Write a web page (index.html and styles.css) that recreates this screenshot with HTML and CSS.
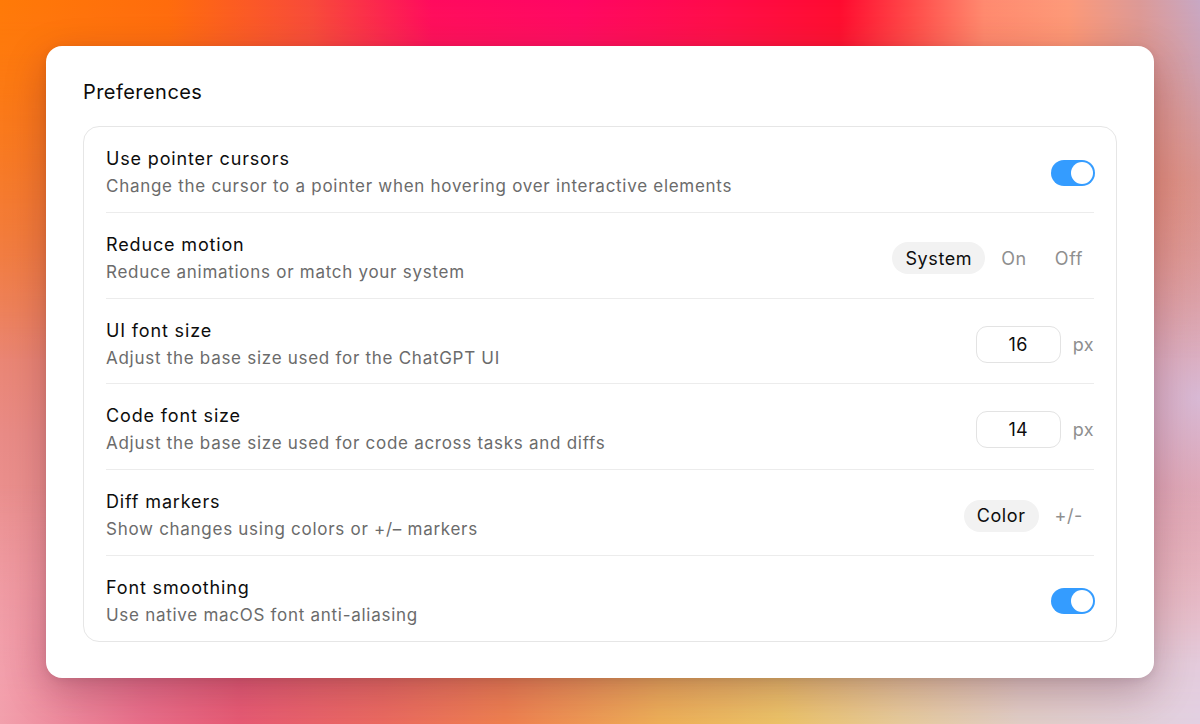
FILE: index.html
```html
<!DOCTYPE html>
<html lang="en">
<head>
<meta charset="utf-8">
<title>Preferences</title>
<link rel="stylesheet" href="styles.css">
</head>
<body>
<main class="card">
  <h1 class="card-title">Preferences</h1>
  <section class="panel">
    <div class="row">
      <div class="text">
        <div class="label">Use pointer cursors</div>
        <div class="desc">Change the cursor to a pointer when hovering over interactive elements</div>
      </div>
      <div class="toggle on"><span class="knob"></span></div>
    </div>
    <div class="row">
      <div class="text">
        <div class="label">Reduce motion</div>
        <div class="desc">Reduce animations or match your system</div>
      </div>
      <div class="segmented">
        <span class="seg active">System</span>
        <span class="seg">On</span>
        <span class="seg">Off</span>
      </div>
    </div>
    <div class="row">
      <div class="text">
        <div class="label">UI font size</div>
        <div class="desc">Adjust the base size used for the ChatGPT UI</div>
      </div>
      <div class="num-field">
        <span class="num-input">16</span>
        <span class="unit">px</span>
      </div>
    </div>
    <div class="row">
      <div class="text">
        <div class="label">Code font size</div>
        <div class="desc">Adjust the base size used for code across tasks and diffs</div>
      </div>
      <div class="num-field">
        <span class="num-input">14</span>
        <span class="unit">px</span>
      </div>
    </div>
    <div class="row">
      <div class="text">
        <div class="label">Diff markers</div>
        <div class="desc">Show changes using colors or +/– markers</div>
      </div>
      <div class="segmented">
        <span class="seg active">Color</span>
        <span class="seg">+/-</span>
      </div>
    </div>
    <div class="row">
      <div class="text">
        <div class="label">Font smoothing</div>
        <div class="desc">Use native macOS font anti-aliasing</div>
      </div>
      <div class="toggle on"><span class="knob"></span></div>
    </div>
  </section>
</main>
</body>
</html>
```

FILE: styles.css
```css
* { box-sizing: border-box; }

html, body {
  margin: 0;
  width: 1200px;
  height: 724px;
  overflow: hidden;
}

body {
  position: relative;
  font-family: Inter, "Noto Sans", "Liberation Sans", sans-serif;
  color: #0d0d0d;
  padding: 46px;
  background:
    radial-gradient(ellipse 260px 220px at 100% 55%, rgba(214, 190, 222, 0.9), rgba(214, 190, 222, 0)),
    linear-gradient(180deg, #f07538 0%, #ec7f5c 35%, #e98b86 60%, #f0a0aa 100%);
}

body::before {
  content: "";
  position: absolute;
  left: 0; top: 0; right: 0;
  height: 360px;
  background: linear-gradient(90deg,
    #ff7a08 0%, #ff6c0c 14%, #f84a3a 26%, #ff0a5e 36%, #ff0564 48%,
    #ff0a4a 60%, #ff0a30 70%, #ff4a4a 76%, #ff8a70 82%, #fd9a7a 89%,
    #dc9a98 95%, #c8a8c4 100%);
  -webkit-mask-image: linear-gradient(180deg, #000 0%, rgba(0,0,0,0.85) 20%, rgba(0,0,0,0) 100%);
  mask-image: linear-gradient(180deg, #000 0%, rgba(0,0,0,0.85) 20%, rgba(0,0,0,0) 100%);
  z-index: 0;
}

body::after {
  content: "";
  position: absolute;
  left: 0; bottom: 0; right: 0;
  height: 240px;
  background: linear-gradient(90deg,
    #f2a0ac 0%, #ea6e8a 12%, #e85a74 20%, #ec6a60 32%, #f08050 42%,
    #efb058 55%, #edc468 65%, #e8cc9c 75%, #e2cfc8 85%, #e2d0e2 100%);
  -webkit-mask-image: linear-gradient(0deg, #000 0%, rgba(0,0,0,0.9) 25%, rgba(0,0,0,0) 100%);
  mask-image: linear-gradient(0deg, #000 0%, rgba(0,0,0,0.9) 25%, rgba(0,0,0,0) 100%);
  z-index: 0;
}

.card {
  position: relative;
  z-index: 1;
  width: 1108px;
  height: 632px;
  background: #ffffff;
  border-radius: 16px;
  padding: 32px 37px 37px;
  box-shadow: 0 14px 40px rgba(70, 10, 40, 0.28), 0 2px 8px rgba(0, 0, 0, 0.08);
}

.card-title {
  margin: 0 0 20px;
  font-size: 20px;
  line-height: 28px;
  font-weight: 400;
  color: #0d0d0d;
  letter-spacing: 0.45px;
}

.panel {
  border: 1px solid #e6e6e6;
  border-radius: 16px;
  padding: 0 22px;
}

.row {
  display: flex;
  align-items: center;
  justify-content: space-between;
  padding: 18px 0 11.8px;
  border-bottom: 1px solid #ececec;
}

.row:last-child { border-bottom: none; }

.label {
  font-size: 18px;
  line-height: 27px;
  color: #0d0d0d;
  letter-spacing: 0.85px;
}

.desc {
  font-size: 17px;
  line-height: 28px;
  color: #6b6b6b;
  letter-spacing: 0.72px;
}

.toggle {
  width: 44px;
  height: 26px;
  border-radius: 13px;
  background: #d9d9d9;
  padding: 2px;
  display: flex;
  margin-right: -1px;
}

.toggle.on {
  background: #349cff;
  justify-content: flex-end;
}

.knob {
  width: 22px;
  height: 22px;
  border-radius: 50%;
  background: #ffffff;
}

.segmented {
  display: flex;
  align-items: center;
  gap: 4px;
  margin-right: -1px;
}

.seg {
  height: 32px;
  padding: 0 12px;
  border-radius: 16px;
  display: flex;
  align-items: center;
  font-size: 18px;
  color: #8f8f8f;
  letter-spacing: 0.6px;
}

.seg.active {
  background: #f2f2f2;
  color: #0d0d0d;
  padding: 0 13px;
}

.num-field {
  display: flex;
  align-items: center;
  gap: 12px;
}

.num-input {
  width: 85px;
  height: 37px;
  border: 1px solid #e3e3e3;
  border-radius: 11px;
  display: flex;
  align-items: center;
  justify-content: center;
  font-size: 18px;
  color: #0d0d0d;
  letter-spacing: 0.4px;
}

.unit {
  font-size: 18px;
  color: #8f8f8f;
  letter-spacing: 0.4px;
}
```
